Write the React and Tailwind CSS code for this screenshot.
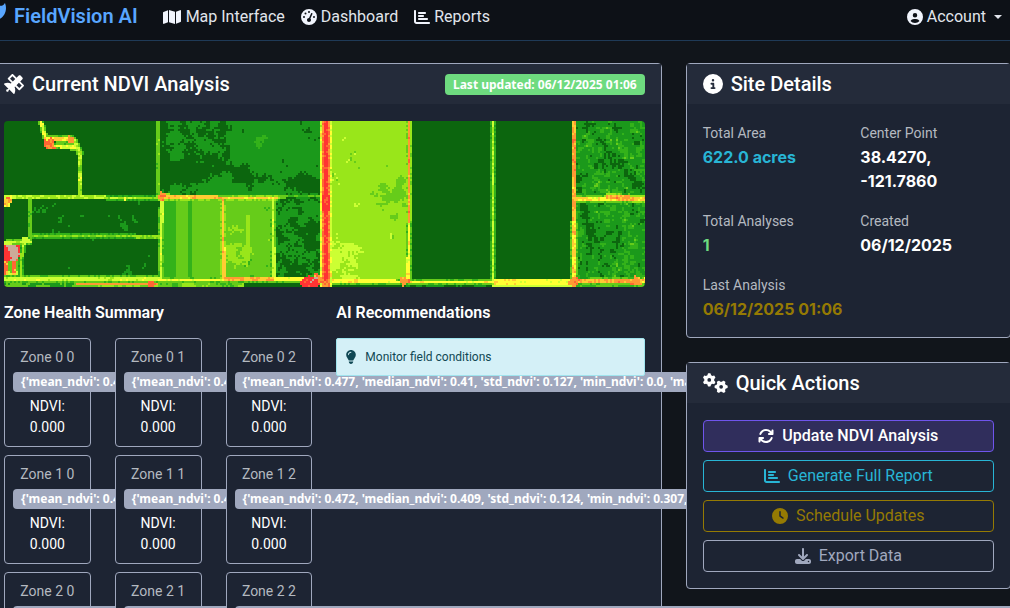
import {
  FaArrowsRotate, FaChartBar, FaCircleInfo, FaCircleUser, FaClock, FaDownload,
  FaGaugeHigh, FaGears, FaLeaf, FaLightbulb, FaMap, FaSatellite,
} from 'react-icons/fa6';

/* ---------- NDVI raster ---------- */

const W = 641;
const H = 166;
const CELL = 2;
const COLS = Math.ceil(W / CELL);
const ROWS = H / CELL;
const RAMP = [
  '#0c660e', '#1b991b', '#33b21a', '#66cc1a', '#99e61a', '#ccff33',
  '#ffff33', '#ffcc33', '#ff9933', '#ff6633', '#ff3333', '#ccaa99',
];

function hash(x, y) {
  let h = Math.imul(x, 374761393) + Math.imul(y, 668265263);
  h = Math.imul(h ^ (h >>> 13), 1274126177);
  return ((h ^ (h >>> 16)) >>> 0) / 4294967296;
}

function smooth(x, y) {
  const x0 = Math.floor(x);
  const y0 = Math.floor(y);
  const fx = x - x0;
  const fy = y - y0;
  const top = hash(x0, y0) * (1 - fx) + hash(x0 + 1, y0) * fx;
  const bottom = hash(x0, y0 + 1) * (1 - fx) + hash(x0 + 1, y0 + 1) * fx;
  return top * (1 - fy) + bottom * fy;
}

const noise = (x, y, s = 9) =>
  0.45 * smooth(x / s, y / s) + 0.35 * smooth(x / 4 + 50, y / 4) + 0.2 * hash(x, y);

const near = (x, y, cx, cy, r) => Math.max(0, 1 - Math.hypot(x - cx, y - cy) / r);

// Distance from a point to a segment.
function segment(x, y, [x1, y1, x2, y2]) {
  const dx = x2 - x1;
  const dy = y2 - y1;
  const t = Math.min(1, Math.max(0, ((x - x1) * dx + (y - y1) * dy) / (dx * dx + dy * dy)));
  return Math.hypot(x - x1 - t * dx, y - y1 - t * dy);
}

function field(x, y) {
  const n = noise(x, y);
  if (y > 161) {
    if (x < 72) return n > 0.5 ? 3 : 1;
    if (x < 155) return y < 164 ? 8 : n > 0.5 ? 4 : 3;
    if (x < 240) return n > 0.6 ? 4 : n > 0.4 ? 3 : 2;
    if (x < 488) return x > 392 && n > 0.5 ? 1 : 0;
    if (x < 568) return 5;
    return n > 0.5 ? 3 : 2;
  }
  if (x < 154 && y < 76) return 0;
  if (x < 158) {
    if (x < 19 && y > 122) {
      if (y < 141) return near(x, y, 7, 132, 13) > 0.35 && n > 0.52 ? 11 : n > 0.7 ? 9 : 10;
      return Math.floor(x / 4) % 2 ? (n > 0.5 ? 3 : 5) : n > 0.5 ? 9 : 7;
    }
    const dense = near(x, y, 36, 86, 14) * 0.3 + near(x, y, 50, 105, 16) * 0.22 +
      near(x, y, 124, 105, 16) * 0.28 + near(x, y, 84, 106, 14) * 0.15 +
      near(x, y, 122, 152, 12) * 0.22 + near(x, y, 27, 153, 10) * 0.2;
    return x > 28 && noise(x, y, 5) + dense > 0.77 ? 1 : 0;
  }
  if (x < 320 && y < 77) {
    const right = Math.min(1, Math.max(0, (x - 190) / 60)) * 0.24 - 0.02;
    const band = Math.max(0, 1 - segment(x, y, [165, 50, 235, 50]) / 16) * -0.3 +
      Math.max(0, 1 - segment(x, y, [235, 56, 318, 64]) / 14) * -0.42 +
      near(x, y, 218, 68, 30) * 0.46 + near(x, y, 262, 73, 16) * 0.2 +
      near(x, y, 306, 70, 18) * -0.36 +
      near(x, y, 280, 34, 10) * -0.3 + near(x, y, 175, 12, 20) * 0.16;
    if (near(x, y, 255, 18, 12) * 0.4 + n > 0.88) return 2;
    return n + right + band > 0.48 ? 1 : 0;
  }
  if (x < 219 && y >= 77) {
    if (x < 172) return 2;
    return Math.abs(x - 186) < 1 + n * 2 ? 2 : 3;
  }
  if (x < 269 && y >= 77) {
    if (near(x, y, 262, 150, 22) * 0.4 + near(x, y, 264, 88, 10) * 0.3 + n > 0.82) return 2;
    if (Math.abs(x - 244) < 2 && y > 94 && y < 140) return 4;
    return near(x, y, 229, 128, 26) * 0.3 + n > 0.76 ? 4 : 3;
  }
  if (x < 321 && y >= 77) {
    const b = near(x, y, 308, 88, 22) * 0.24 + near(x, y, 283, 122, 20) * 0.06 -
      near(x, y, 300, 138, 24) * 0.06;
    return n + b > 0.54 ? 1 : 0;
  }
  if (x < 405) {
    const green = near(x, y, 394, 72, 19) * 0.55 + near(x, y, 378, 77, 26) * 0.32 +
      near(x, y, 391, 98, 12) * 0.4 + near(x, y, 355, 48, 12) * 0.28 +
      near(x, y, 398, 58, 9) * 0.35;
    if (n + green > 0.82) return 3;
    const pale = near(x, y, 333, 138, 32) * 0.5 + near(x, y, 350, 158, 18) * 0.3;
    return n + pale > 0.78 ? 5 : 4;
  }
  if (x < 570) return 0;
  const diag = segment(x, y, y < 77 ? [583, 4, 636, 68] : [580, 84, 586, 118]);
  const low = y > 77 ? near(x, y, 602, 117, 22) * 0.16 + near(x, y, 588, 145, 20) * 0.15 +
    near(x, y, 622, 148, 18) * 0.1 : near(x, y, 590, 45, 20) * 0.1;
  const fine = 0.65 * n + 0.35 * hash(Math.floor(x / 3), Math.floor(y / 3));
  const m = fine - Math.max(0, 1 - diag / 9) * 0.34 - low;
  if (m < 0.3) return 0;
  if (m > 0.74) return 3;
  return m > 0.58 ? 2 : 1;
}

// [segment, half width, centre colour range, fringe colour]
const LINES = [
  [[37, 0, 41, 16], 1.4, [5, 7], 3],
  [[42, 17, 69, 18], 2, [5, 8], 3],
  [[46, 25, 70, 26], 1.6, [4, 7], 3],
  [[69, 18, 76, 32], 1.6, [4, 6], 3],
  [[76, 32, 76, 76], 1.3, [3, 6], 2],
  [[154, 0, 154, 76], 1.2, [2, 4], 1],
  [[0, 76, 88, 76], 1.2, [3, 6], 2],
  [[88, 76, 158, 77], 1.2, [3, 6], 2],
  [[272, 76, 320, 75], 1.2, [2, 3], 1],
  [[26, 77, 26, 121], 1.2, [2, 4], 1],
  [[27, 115, 158, 116], 1.2, [3, 4], 2],
  [[0, 122, 26, 121], 1.3, [4, 6], 3],
  [[19, 122, 16, 158], 1.2, [3, 5], 2],
  [[158, 77, 157, 158], 1.3, [4, 6], 3],
  [[0, 158, 155, 158], 1.4, [4, 6], 3],
  [[155, 159, 320, 158], 1.5, [5, 7], 3],
  [[220, 158, 269, 158], 1.2, [7, 8], 5],
  [[155, 76, 272, 77], 1.5, [6, 8], 4],
  [[219, 78, 220, 158], 1.4, [6, 8], 4],
  [[269, 78, 270, 158], 1.4, [4, 6], 3],
  [[489, 0, 489, 158], 1.3, [4, 5], 2],
  [[405, 0, 405, 100], 1.6, [7, 9], 4],
  [[405, 100, 404, 160], 1.4, [5, 7], 3],
  [[328, 160, 490, 161], 1.4, [5, 7], 3],
  [[490, 161, 570, 161], 2, [5, 7], 4],
  [[570, 0, 570, 100], 1.3, [6, 9], 3],
  [[570, 100, 570, 160], 1.5, [5, 8], 3],
  [[570, 78, 641, 78], 1.4, [5, 8], 3],
  [[604, 76, 641, 78], 2.2, [6, 9], 4],
  [[570, 161, 641, 159], 2, [6, 9], 3],
];

const BLOBS = [
  [46, 23, 6, 8, 9], [66, 19, 4, 7, 9], [3, 82, 5, 6, 9], [158, 75, 4, 7, 9],
  [121, 78, 2, 5, 7], [147, 163, 4, 8, 10], [306, 163, 9, 9, 11], [313, 158, 5, 6, 10],
  [400, 160, 5, 6, 9], [570, 161, 5, 7, 9], [633, 160, 6, 7, 9], [22, 120, 4, 4, 6],
];

function colour(cx, cy) {
  const x = cx * CELL + 1;
  const y = cy * CELL + 1;
  const r = hash(cx + 900, cy + 300);
  const pick = (lo, hi) => Math.round(lo + (hi - lo) * (0.5 * r + 0.5 * smooth(x / 7, y / 7)));

  const road = Math.abs(x - 322);
  if (y < 160 && road < (y > 74 && y < 90 ? 4 : 2.5)) return r > 0.88 ? 9 : 10;
  for (const [bx, by, br, lo, hi] of BLOBS) {
    if (Math.hypot(x - bx, y - by) < br * (0.75 + 0.4 * r)) return pick(lo, hi);
  }
  if (road < 4) return pick(8, 9);
  if (road < 6) return pick(4, 7);

  let value = null;
  for (const [seg, half, range, fringe] of LINES) {
    const d = segment(x, y, seg);
    if (d <= half) value = Math.max(value ?? 0, pick(range[0], range[1]));
    else if (d <= half + 1.6) value = Math.max(value ?? 0, r > 0.3 ? fringe : fringe - 1);
  }
  return value === null ? field(x, y) : value;
}

function buildRaster() {
  const paths = RAMP.map(() => '');
  for (let cy = 0; cy < ROWS; cy += 1) {
    let start = 0;
    let current = colour(0, cy);
    for (let cx = 1; cx <= COLS; cx += 1) {
      const next = cx < COLS ? colour(cx, cy) : -1;
      if (next !== current) {
        paths[current] += `M${start * CELL} ${cy * CELL}h${(cx - start) * CELL}v${CELL}H${start * CELL}z`;
        start = cx;
        current = next;
      }
    }
  }
  return paths;
}

const RASTER = buildRaster();

function NdviMap() {
  return (
    <svg
      viewBox={`0 0 ${W} ${H}`}
      role="img"
      aria-label="NDVI map"
      shapeRendering="crispEdges"
      preserveAspectRatio="none"
      className="block w-full rounded"
    >
      {RASTER.map((d, i) => <path key={RAMP[i]} d={d} fill={RAMP[i]} />)}
    </svg>
  );
}

/* ---------- Page ---------- */

const stats = (mean, median, std, min) =>
  `{'mean_ndvi': ${mean}, 'median_ndvi': ${median}, 'std_ndvi': ${std}, 'min_ndvi': ${min}, 'max_ndvi': 0.642, 'p25_ndvi': 0.361, 'p75_ndvi': 0.571, 'range_ndvi': 0.335}`;

const ZONES = [
  ['Zone 0 0', stats('0.477', '0.41', '0.127', '0.0')],
  ['Zone 0 1', stats('0.477', '0.41', '0.127', '0.0')],
  ['Zone 0 2', stats('0.477', '0.41', '0.127', '0.0')],
  ['Zone 1 0', stats('0.472', '0.409', '0.124', '0.307')],
  ['Zone 1 1', stats('0.472', '0.409', '0.124', '0.307')],
  ['Zone 1 2', stats('0.472', '0.409', '0.124', '0.307')],
  ['Zone 2 0', stats('0.472', '0.409', '0.124', '0.307')],
  ['Zone 2 1', stats('0.472', '0.409', '0.124', '0.307')],
  ['Zone 2 2', stats('0.472', '0.409', '0.124', '0.307')],
];

const NAV = [
  ['Map Interface', FaMap, 'h-4 w-5'],
  ['Dashboard', FaGaugeHigh, 'size-4'],
  ['Reports', FaChartBar, 'size-4'],
];

const DETAILS = [
  ['Total Area', '622.0 acres', 'text-[#28b5d5]', ''],
  ['Center Point', '38.4270, -121.7860', 'text-white', ''],
  ['Total Analyses', '1', 'text-[#6edb7f]', ''],
  ['Created', '06/12/2025', 'text-white', ''],
  ['Last Analysis', '06/12/2025 01:06', 'text-[#957a03]', 'col-span-2'],
];

const ACTIONS = [
  ['Update NDVI Analysis', FaArrowsRotate, 'border-[#6f55ec] bg-[#302e5c] text-white font-medium'],
  ['Generate Full Report', FaChartBar, 'border-[#28b5d5] text-[#28b5d5]'],
  ['Schedule Updates', FaClock, 'border-[#957a03] text-[#957a03]'],
  ['Export Data', FaDownload, 'border-[#a0a8be] text-[#a0a8be]'],
];

function Card({ title, icon: Icon, iconSize = 'size-5', extra, children }) {
  return (
    <section className="relative rounded-sm border border-[#a0a8be] bg-[#1d2433]">
      <header className="flex h-10 items-center justify-between bg-[#242b3a] px-4">
        <h2 className="flex items-center gap-2 text-xl font-medium text-white">
          <Icon className={iconSize} />
          {title}
        </h2>
        {extra}
      </header>
      <div className="px-4 pt-[17px] pb-4">{children}</div>
    </section>
  );
}

export default function App() {
  return (
    <div className="h-screen overflow-hidden bg-[#11151b] font-[Roboto,'Noto_Sans',sans-serif] text-base text-white">
      <nav className="flex h-[41px] items-start border-b border-[#1f3a57] bg-[#0d1117] pt-1 pr-2">
        <a href="#home" className="-ml-3.5 flex shrink-0 items-center gap-2 text-xl leading-6 font-semibold text-[#58a6ff]">
          <FaLeaf className="-mt-2" />
          FieldVision AI
        </a>
        <div className="ml-6 flex gap-4">
          {NAV.map(([label, Icon, size]) => (
            <a key={label} href="#nav" className="flex items-center gap-1 leading-[26px] text-[#e1e5ec]">
              <Icon className={`text-[#f0f4fc] ${size}`} />
              {label}
            </a>
          ))}
        </div>
        <button type="button" className="ml-auto flex items-center gap-1 leading-[26px] text-[#e1e5ec]">
          <FaCircleUser className="text-[#f0f4fc]" />
          Account
          <span className="ml-1 border-x-4 border-t-4 border-x-transparent border-t-current" />
        </button>
      </nav>

      <main className="-mr-px -ml-[13px] grid grid-cols-12 items-start gap-6 pt-[22px]">
        <div className="col-span-8">
          <Card
            title="Current NDVI Analysis"
            icon={FaSatellite}
            extra={(
              <span className="rounded bg-[#6edb7f] px-2 py-1 font-['Noto_Sans'] text-xs leading-[13px] font-bold">
                Last updated: 06/12/2025 01:06
              </span>
            )}
          >
            <NdviMap />
            <div className="mt-4 grid grid-cols-2 gap-6">
              <section className="min-w-0">
                <h3 className="leading-5 font-semibold">Zone Health Summary</h3>
                <div className="mt-[15px] grid grid-cols-3 gap-x-6 gap-y-2">
                  {ZONES.map(([name, value]) => (
                    <article
                      key={name}
                      className="relative min-w-0 rounded-sm border border-[#a0a8be] bg-[#1d2433] p-2 text-center text-sm leading-[21px]"
                    >
                      <div className="text-[#b4b9c0]">{name}</div>
                      <div className="my-1 flex">
                        <span className="shrink-0 rounded bg-[#a0a8be] px-2 py-1 font-['Noto_Sans'] text-xs leading-3 font-bold whitespace-nowrap">
                          {value}
                        </span>
                      </div>
                      <div className="px-2">NDVI: 0.000</div>
                    </article>
                  ))}
                </div>
              </section>
              <section className="min-w-0">
                <h3 className="leading-5 font-semibold">AI Recommendations</h3>
                <div
                  role="alert"
                  className="relative mt-[15px] flex items-center gap-2 rounded-xs border border-[#a0e4ee] bg-[#d4f0f7] p-2 text-xs leading-5 text-[#104854]"
                >
                  <FaLightbulb className="h-3.5 w-3" />
                  Monitor field conditions
                </div>
              </section>
            </div>
          </Card>
        </div>

        <aside className="col-span-4 flex flex-col gap-6">
          <Card title="Site Details" icon={FaCircleInfo}>
            <dl className="grid grid-cols-2 gap-x-6 gap-y-4">
              {DETAILS.map(([label, value, tone, span]) => (
                <div key={label} className={span}>
                  <dt className="text-sm leading-6 text-[#b4b9c0]">{label}</dt>
                  <dd className={`font-[Inter] leading-6 font-bold ${tone}`}>{value}</dd>
                </div>
              ))}
            </dl>
          </Card>
          <Card title="Quick Actions" icon={FaGears} iconSize="h-5 w-[25px]">
            <div className="flex flex-col gap-2">
              {ACTIONS.map(([label, Icon, tone]) => (
                <button
                  key={label}
                  type="button"
                  className={`flex h-8 items-center justify-center gap-2 rounded-sm border ${tone}`}
                >
                  <Icon />
                  {label}
                </button>
              ))}
            </div>
          </Card>
        </aside>
      </main>
    </div>
  );
}
